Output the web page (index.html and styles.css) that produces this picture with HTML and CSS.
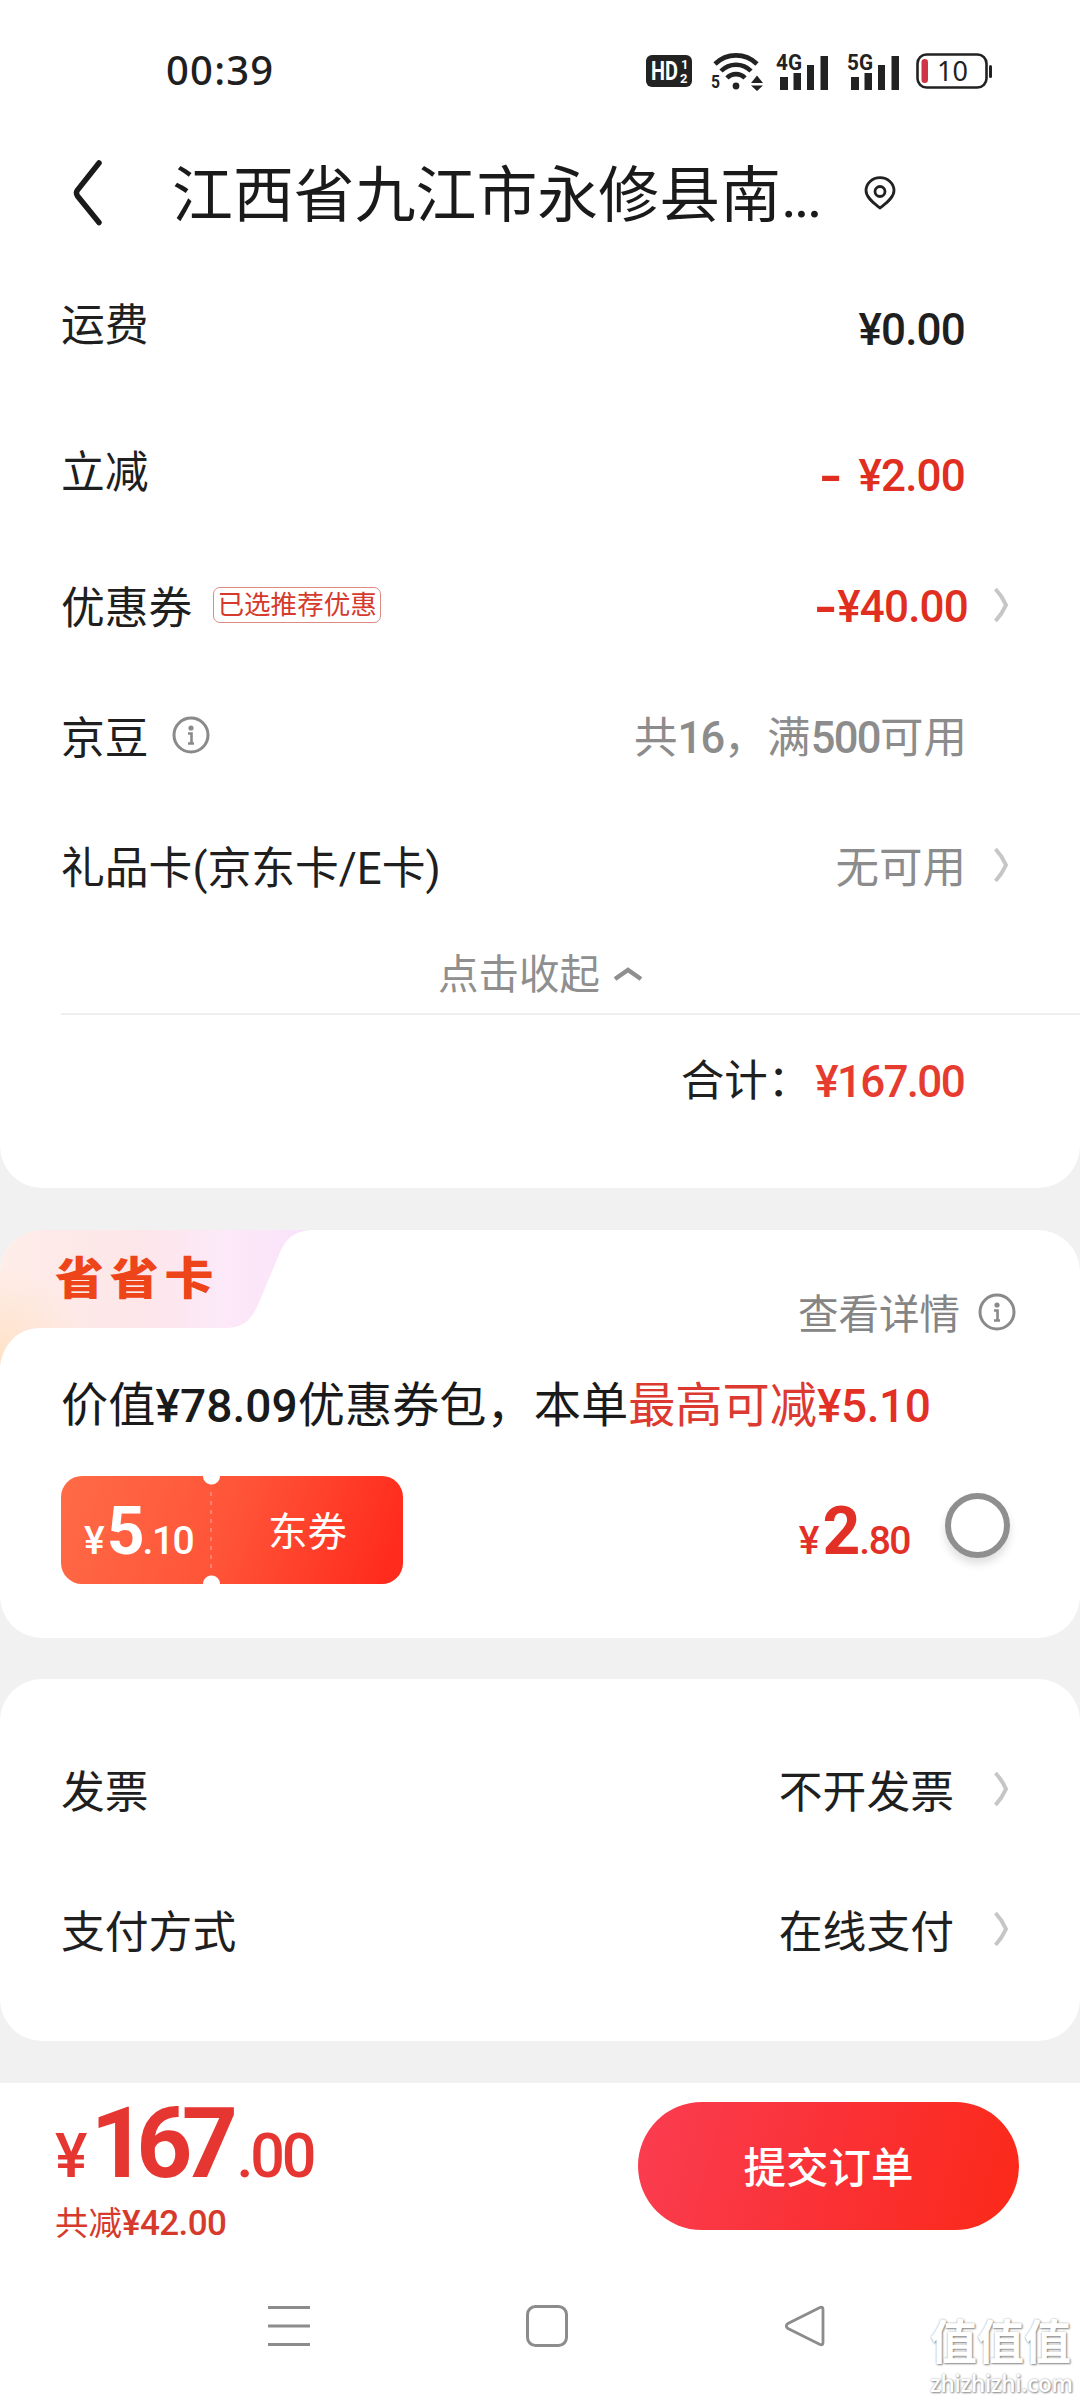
FILE: index.html
```html
<!DOCTYPE html>
<html lang="zh-CN">
<head>
<meta charset="utf-8">
<title>提交订单</title>
<link rel="stylesheet" href="styles.css">
</head>
<body>
<svg class="defs" width="0" height="0" aria-hidden="true">
  <symbol id="chevron" viewBox="0 0 16 36"><path d="M2.5 2 Q9 9 13 18 Q9 27 2.5 34" fill="none" stroke="#c6c6c6" stroke-width="4" stroke-linejoin="round"/></symbol>
  <symbol id="info" viewBox="0 0 38 38"><circle cx="19" cy="19" r="17" fill="none" stroke="#8a8a8a" stroke-width="3"/><circle cx="19" cy="12" r="2.6" fill="#8a8a8a"/><path d="M16 17.5H19.5V27M16 27.5H22" fill="none" stroke="#8a8a8a" stroke-width="2.600"/></symbol>
</svg>
<main class="screen">
  <div class="status">
    <span class="time">00:39</span>
    <div class="status-icons">
      <svg width="46" height="32" viewBox="0 0 46 32"><rect width="46" height="32" rx="6" fill="#222"/><text x="5" y="25" font-size="25" textLength="27" lengthAdjust="spacingAndGlyphs" class="svg-bold" fill="#fff">HD</text><text x="35" y="14" font-size="13" class="svg-bold" fill="#fff">1</text><text x="34" y="28" font-size="13" class="svg-bold" fill="#fff">2</text></svg>
      <svg class="wifi" width="54" height="42" viewBox="0 -1 54 42"><g fill="none" stroke="#222" stroke-width="4.6"><path d="M5 13 A30 30 0 0 1 47 13"/><path d="M11 20 A21 21 0 0 1 41 20"/><path d="M17 27 A12.5 12.5 0 0 1 35 27"/></g><circle cx="26" cy="35" r="3.4" fill="#222"/><text x="1" y="36.500" font-size="19" textLength="9" lengthAdjust="spacingAndGlyphs" class="svg-bold" fill="#222">5</text><path d="M41 32H53L47 24.5ZM41 34.5H53L47 40Z" fill="#222"/></svg>
      <svg class="cell" width="54" height="40" viewBox="0 -2 54 40"><text x="0" y="17" font-size="22" textLength="26" lengthAdjust="spacingAndGlyphs" class="svg-bold" fill="#222">4G</text><path d="M4 24H12V37H4ZM17.500 20H25V37H17.500ZM31 12H38V37H31ZM44.500 3H52V37H44.500Z" fill="#222"/></svg>
      <svg class="cell" width="54" height="40" viewBox="0 -2 54 40"><text x="0" y="17" font-size="22" textLength="26" lengthAdjust="spacingAndGlyphs" class="svg-bold" fill="#222">5G</text><path d="M4 24H12V37H4ZM17.500 20H25V37H17.500ZM31 12H38V37H31ZM44.500 3H52V37H44.500Z" fill="#222"/></svg>
      <svg class="battery" width="78" height="36" viewBox="0 0 78 36"><rect x="1.500" y="1.500" width="69" height="33" rx="9" fill="none" stroke="#222" stroke-width="2.600"/><rect x="5.500" y="6" width="6.500" height="24" rx="3.200" fill="#cf3447"/><rect x="73" y="12" width="3" height="13" rx="1.500" fill="#222"/><text x="21" y="27.500" font-size="27" textLength="31" class="svg-num" fill="#222">10</text></svg>
    </div>
  </div>

  <header class="address">
    <svg width="30" height="68" viewBox="0 0 30 68"><path d="M27 4 L5.500 31 Q3.500 34 5.500 37 L27 63.500" fill="none" stroke="#1a1a1a" stroke-width="5.500" stroke-linecap="round"/></svg>
    <h1 class="address-text">江西省九江市永修县南<span class="dots">...</span></h1>
    <svg width="32" height="34" viewBox="0 0 32 34"><path d="M16 32 C11 28 2 22 2 14.500 A14 12.800 0 0 1 30 14.500 C30 22 21 28 16 32Z" fill="none" stroke="#222" stroke-width="2.800"/><circle cx="16" cy="15.500" r="5" fill="none" stroke="#222" stroke-width="2.800"/></svg>
  </header>

  <section class="card bill">
    <div class="row row-freight"><span>运费</span><span class="amount">¥0.00</span></div>
    <div class="row row-cut"><span>立减</span><span class="amount red"><span class="minus gap">-</span>¥2.00</span></div>
    <div class="row row-coupon"><span>优惠券</span><span class="tag">已选推荐优惠</span><span class="amount red"><span class="minus">-</span>¥40.00</span><svg class="chevron"><use href="#chevron"/></svg></div>
    <div class="row row-beans"><span>京豆</span><svg class="info"><use href="#info"/></svg><span class="amount muted">共<b>16</b>，满<b>500</b>可用</span></div>
    <div class="row row-gift"><span>礼品卡(京东卡/E卡)</span><span class="amount muted">无可用</span><svg class="chevron"><use href="#chevron"/></svg></div>
    <div class="toggle"><span>点击收起</span><svg width="30" height="14" viewBox="0 0 30 14"><path d="M2 12 L15 3 L28 12" fill="none" stroke="#8f8f8f" stroke-width="4.500"/></svg></div>
    <div class="total"><span>合计：</span><span class="total-amount">¥167.00</span></div>
  </section>

  <section class="card saver">
    <div class="saver-head">
      <svg class="saver-tab" width="312" height="136" viewBox="0 0 312 136">
        <defs>
          <linearGradient id="tabFill" x1="0" y1="0" x2="1" y2="0"><stop offset="0" stop-color="#feede8"/><stop offset=".45" stop-color="#fde6e9"/><stop offset=".7" stop-color="#fce9f8"/><stop offset="1" stop-color="#fae2fb"/></linearGradient>
          <radialGradient id="tabGlow" gradientUnits="userSpaceOnUse" cx="0" cy="128" r="90"><stop offset="0" stop-color="#ffe2c8"/><stop offset="1" stop-color="#ffe2c8" stop-opacity="0"/></radialGradient>
        </defs>
        <path d="M0 0H312C296 1 287 7 281 20L257 77C250 92 241 98 225 98H40C18 98 3 114 0 136Z" fill="url(#tabFill)"/>
        <path d="M0 0H312C296 1 287 7 281 20L257 77C250 92 241 98 225 98H40C18 98 3 114 0 136Z" fill="url(#tabGlow)"/>
      </svg>
      <span class="saver-name">省省卡</span>
      <span class="saver-more">查看详情</span>
      <svg class="info"><use href="#info"/></svg>
    </div>
    <p class="saver-desc">价值<b>¥78.09</b>优惠券包，本单<em>最高可减<b>¥5.10</b></em></p>
    <div class="saver-offer">
      <div class="ticket">
        <div class="ticket-value"><span class="price"><i>¥</i><b>5</b><small>.10</small></span></div>
        <div class="ticket-kind">东券</div>
      </div>
      <span class="price offer-price"><i>¥</i><b>2</b><small>.80</small></span>
      <span class="radio"></span>
    </div>
  </section>

  <section class="card options">
    <div class="row row-invoice"><span>发票</span><span class="choice">不开发票</span><svg class="chevron"><use href="#chevron"/></svg></div>
    <div class="row row-pay"><span>支付方式</span><span class="choice">在线支付</span><svg class="chevron"><use href="#chevron"/></svg></div>
  </section>

  <footer class="checkout">
    <div class="sum">
      <span class="sum-price"><i>¥</i><b>167</b><small>.00</small></span>
      <span class="sum-cut">共减<b>¥42.00</b></span>
    </div>
    <button class="submit" type="button">提交订单</button>
  </footer>

  <nav class="nav">
    <svg width="42" height="42" viewBox="0 0 42 42"><path d="M0 2.500H42M0 21H42M0 39.500H42" stroke="#8c8c8c" stroke-width="3"/></svg>
    <svg width="42" height="42" viewBox="0 0 42 42"><rect x="1.500" y="1.500" width="39" height="39" rx="8" fill="none" stroke="#8c8c8c" stroke-width="3"/></svg>
    <svg width="42" height="42" viewBox="0 0 42 42"><path d="M36 2.500 L4 18.500 Q0.500 21 4 23.500 L36 39.500 Q39 40.500 39 37.500 V4.500 Q39 1.500 36 2.500Z" fill="none" stroke="#8c8c8c" stroke-width="2.800"/></svg>
  </nav>
  <div class="watermark"><strong>值值值</strong><span>zhizhizhi.com</span></div>
</main>
</body>
</html>
```
FILE: styles.css
```css
* { box-sizing: border-box; }
body {
  margin: 0;
  background: #f1f1f1;
  color: #1f1f1f;
  font-family: Roboto, "Noto Sans CJK SC", sans-serif;
}
svg { flex: none; display: block; }
i, em { font-style: normal; }
.defs { position: absolute; }
.svg-bold { font-family: Roboto, sans-serif; font-weight: 700; }
.svg-num { font-family: "Noto Sans", sans-serif; }

.screen {
  position: relative;
  width: 1080px;
  height: 2400px;
  overflow: hidden;
  display: flex;
  flex-direction: column;
}

.status {
  height: 140px;
  flex: none;
  display: flex;
  align-items: center;
  justify-content: space-between;
  padding: 2px 86px 0 166px;
  background: #fff;
}
.time { font: 500 40px/46px "Noto Sans", sans-serif; letter-spacing: 1.200px; margin-bottom: 2px; }
.status-icons { display: flex; align-items: center; }
.wifi { margin-left: 18px; }
.cell { margin-left: 12px; }
.cell + .cell { margin-left: 17px; }
.battery { margin-left: 15px; }

.address {
  height: 122px;
  flex: none;
  display: flex;
  align-items: center;
  padding: 0 0 17px 72px;
  background: #fff;
}
.address-text {
  width: 692px;
  margin: 8px 0 0 70px;
  font-size: 60.900px;
  line-height: 80px;
  font-weight: 400;
  color: #1a1a1a;
  white-space: nowrap;
}
.dots { letter-spacing: -3.200px; }

.card { background: #fff; border-radius: 42px; flex: none; }
.bill { height: 926px; border-radius: 0 0 42px 42px; }
.row {
  display: flex;
  align-items: center;
  padding: 0 71px 0 61px;
  font-size: 43.800px;
  line-height: 56px;
}
.row-freight { height: 128px; }
.row-cut { height: 166px; }
.row-coupon { height: 106px; }
.row-beans { height: 154px; }
.row-gift { height: 106px; }
.amount {
  margin-left: auto;
  margin-right: 44px;
  font-weight: 500;
  white-space: pre;
  font-size: 44px;
  letter-spacing: -.8px;
}
.minus { display: inline-block; transform: scale(1.5, 1.25); margin-right: 5px; }
.minus.gap { margin-right: 21px; }
.row-freight .amount { padding-top: 7px; }
.row-cut .amount { padding-top: 6px; }
.row-coupon .amount { margin-right: 25px; padding-bottom: 4px; }
.row-gift .amount { margin-right: 27px; }
.red { color: #e02e20; }
.muted { color: #8c8c8c; font-weight: 400; font-size: 43.500px; letter-spacing: 0; }
.row-beans .muted { margin-right: 42px; }
.muted b { font-weight: 500; letter-spacing: -1.600px; }
.chevron { width: 16px; height: 36px; margin-bottom: 8px; }
.info { width: 38px; height: 38px; }
.row .info { margin: 0 0 8px 23px; }
.tag {
  height: 36px;
  margin: 0 0 9px 21px;
  padding: 0 3px;
  border: 1px solid #dc8a82;
  border-radius: 7px;
  font-size: 26.600px;
  line-height: 34px;
  color: #d63a2c;
}

.toggle {
  height: 93px;
  margin-left: 61px;
  padding: 15px 60px 0 0;
  border-bottom: 2px solid #efefef;
  display: flex;
  align-items: center;
  justify-content: center;
  gap: 13px;
  font-size: 40.500px;
  line-height: 50px;
  color: #8f8f8f;
}
.toggle svg { margin-bottom: 3px; }
.total {
  height: 134px;
  display: flex;
  align-items: center;
  justify-content: flex-end;
  padding-right: 116px;
  font-size: 43.500px;
  line-height: 56px;
}
.total-amount { font-weight: 500; color: #e63c2f; font-size: 44px; letter-spacing: -1.700px; margin-left: 4px; }

.saver { height: 408px; margin-top: 42px; overflow: hidden; }
.saver-head {
  position: relative;
  height: 136px;
  display: flex;
  align-items: flex-start;
  padding: 0 64px 0 55px;
}
.saver-tab { position: absolute; left: 0; top: 0; }
.saver-name {
  position: relative;
  margin-top: 22px;
  font-size: 49px;
  line-height: 56px;
  font-weight: 900;
  letter-spacing: 5.800px;
  color: #ee4419;
  transform: scaleY(.92);
}
.saver-more {
  margin: 58px 18px 0 auto;
  font-size: 40.500px;
  line-height: 54px;
  color: #858585;
}
.saver-head .info { margin-top: 63px; }
.saver-desc {
  margin: 10px 0 0 61px;
  font-size: 47.200px;
  line-height: 60px;
  white-space: nowrap;
  color: #1a1a1a;
}
.saver-desc b { font-size: 46px; font-weight: 500; letter-spacing: .1px; }
.saver-desc em { color: #dc3a30; }
.saver-desc em b { letter-spacing: -.4px; color: #e23026; }
.saver-offer {
  height: 108px;
  margin: 40px 70px 0 61px;
  display: flex;
  align-items: center;
}
.ticket {
  width: 342px;
  height: 108px;
  display: flex;
  border-radius: 21px;
  color: #fff;
  background:
    radial-gradient(circle at 150.500px 0, #fff 8px, transparent 9px),
    radial-gradient(circle at 150.500px 108px, #fff 8px, transparent 9px),
    linear-gradient(110deg, #ff6b47, #ff5338 50%, #ff2b1c 95%);
}
.ticket-value {
  width: 151px;
  padding: 23px 0 0 23px;
  background: repeating-linear-gradient(#ffffff44 0 4px, transparent 4px 9px) right 16px / 2px 76px no-repeat;
}
.ticket-kind {
  flex: 1;
  padding: 25px 0 0 56px;
  font-size: 39.500px;
  line-height: 64px;
}
.price { font-size: 40px; line-height: 76px; white-space: nowrap; display: block; }
.price i { font-weight: 500; font-size: 39px; }
.price b { font-weight: 700; font-size: 66px; line-height: 1; margin-left: 2px; letter-spacing: -2px; }
.price small { font-weight: 500; font-size: 39px; letter-spacing: -1.500px; }
.offer-price { margin: 18px 35px 0 auto; color: #e23026; }
.offer-price b { margin-left: 3px; letter-spacing: -1px; }
.radio {
  width: 65px;
  height: 65px;
  margin-bottom: 10px;
  border: 6px solid #8f8f8f;
  border-radius: 50%;
  box-shadow: 0 6px 8px #00000020;
}

.options { height: 362px; margin-top: 41px; padding-top: 43px; }
.row-invoice { height: 142px; }
.row-pay { height: 138px; }
.choice { margin-left: auto; margin-right: 39px; }

.checkout {
  flex: none;
  height: 169px;
  margin-top: 42px;
  padding: 0 61px 0 55px;
  display: flex;
  align-items: flex-start;
  justify-content: space-between;
  background: #fff;
}
.sum { color: #e63632; }
.sum-price { display: block; height: 117px; line-height: 146px; white-space: nowrap; }
.sum-price i { font-weight: 500; font-size: 61px; letter-spacing: -1px; }
.sum-price b { font-weight: 700; font-size: 98px; letter-spacing: -10.500px; line-height: 1; margin-left: 4px; }
.sum-price small { font-weight: 500; font-size: 61px; letter-spacing: -3.200px; margin-left: 9px; }
.sum-cut { display: block; font-size: 33.500px; line-height: 48px; color: #d63a2c; }
.sum-cut b { font-size: 35px; font-weight: 500; letter-spacing: -.6px; }
.submit {
  width: 381px;
  height: 128px;
  margin-top: 19px;
  padding: 5px 0 0;
  border: 0;
  border-radius: 64px;
  background: linear-gradient(105deg, #fa3d51, #fa2f30 60%, #fb2918);
  color: #fff;
  font: 500 42.500px/56px Roboto, "Noto Sans CJK SC", sans-serif;
}

.nav {
  flex: 1;
  display: flex;
  justify-content: space-between;
  padding: 53px 254px 0 268px;
  background: #fff;
}
.watermark {
  position: absolute;
  left: 930px;
  top: 2314px;
  display: flex;
  flex-direction: column;
  color: #fff;
  text-shadow: 1px 1px 2px #888, 0 0 2px #aaa;
}
.watermark strong { font-size: 47px; line-height: 58px; }
.watermark span { font: 600 22.500px/24px "Open Sans", sans-serif; letter-spacing: -.3px; }
```
